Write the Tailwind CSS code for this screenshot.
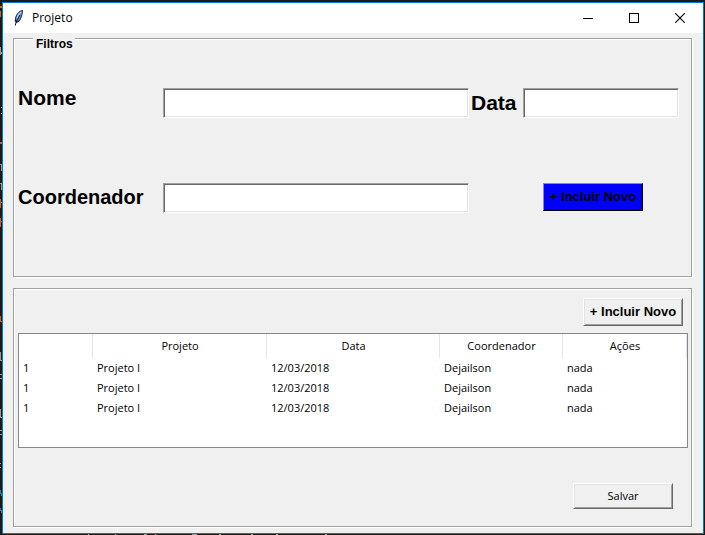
<!DOCTYPE html>
<html lang="pt-BR">
<head>
<meta charset="utf-8">
<meta name="viewport" content="width=device-width, initial-scale=1">
<title>Projeto</title>
<script src="https://cdn.jsdelivr.net/npm/@tailwindcss/browser@4"></script>
</head>
<body class="relative flex min-h-screen flex-col bg-[#1a1a1c] pt-[2px] pr-px pb-px pl-[2px] text-black">
<!-- Fragments of the editor behind the window -->
<div class="absolute inset-0 overflow-hidden" aria-hidden="true">
  <svg class="absolute left-0 top-0" width="2" height="535" shape-rendering="crispEdges">
    <path d="M0 6h2v2h-2zM0 11h1v6h-1z" fill="#b8742c"/>
    <path d="M0 47h1v8h-1zM1 52h1v2h-1zM1 107h1v1h-1zM1 113h1v1h-1zM0 164h2v1h-2zM1 165h1v6h-1zM0 183h2v1h-2zM1 184h1v6h-1zM0 352h1v8h-1zM0 360h2v1h-2zM0 374h2v1h-2zM0 378h2v1h-2zM0 409h1v8h-1zM0 417h2v1h-2zM0 430h2v1h-2zM0 434h2v1h-2zM0 463h1v1h-1zM0 467h1v1h-1z" fill="#9a9a92"/>
    <path d="M0 142h2v2h-2zM0 202h2v1h-2zM0 199h1v9h-1zM0 221h2v1h-2zM0 218h1v9h-1zM0 316h1v6h-1zM1 321h1v1h-1z" fill="#b5633a"/>
    <path d="M0 490h1v4h-1zM1 493h1v3h-1zM0 508h1v3h-1zM1 510h1v3h-1z" fill="#2080a8"/>
  </svg>
  <svg class="absolute bottom-0 left-0" width="360" height="1" shape-rendering="crispEdges">
    <path d="M88 0h1v1h-1zM115 0h1v1h-1zM144 0h3v1h-3zM155 0h1v1h-1zM192 0h5v1h-5zM219 0h2v1h-2zM251 0h2v1h-2zM276 0h2v1h-2zM325 0h2v1h-2z" fill="#8ca0a8"/>
  </svg>
</div>

<div class="relative flex grow flex-col border border-[#0078d7] bg-[#f0f0f0]">
  <header class="flex h-[30px] shrink-0 items-center bg-white pl-[9px]">
    <svg class="shrink-0" width="14" height="18" viewBox="0 0 14 18" aria-hidden="true">
      <path d="M10.500 1C7.500 1.500 4.500 4.500 3.300 8.200L2.600 12l1.700 2 2.800-1.200C9.500 10 10.800 6 11 1.500z" fill="#1b2638"/>
      <path d="M10 1.800C7 3 5 5.600 4.200 8.500l-.4 3 1 .9 2.200-1C9 8.700 10 5.800 10 1.800z" fill="#5a8fd0"/>
      <path d="M9 3C6.700 5 5.500 7 5 9.600" fill="none" stroke="#b9d3ee" stroke-width="1.300"/>
      <path d="M8 6C6.200 9 4.200 12 3.200 16.500" fill="none" stroke="#111" stroke-width="1"/>
    </svg>
    <h1 class="ml-[6px] grow font-['Open_Sans','Noto_Sans',sans-serif] text-[12px] leading-[16px]">Projeto</h1>
    <button type="button" aria-label="Minimizar" class="flex h-[28px] w-[46px] items-center justify-center">
      <svg width="10" height="10" shape-rendering="crispEdges"><path d="M0 5h10v1H0z"/></svg>
    </button>
    <button type="button" aria-label="Maximizar" class="flex h-[28px] w-[46px] items-center justify-center">
      <svg width="10" height="10" shape-rendering="crispEdges"><path d="M.5 .5h9v9h-9z" fill="none" stroke="#000"/></svg>
    </button>
    <button type="button" aria-label="Fechar" class="flex h-[28px] w-[46px] items-center justify-center">
      <svg width="10" height="10"><path d="M.2 .2l9.600 9.600M9.800 .2L.2 9.800" stroke="#000" stroke-width="1.100"/></svg>
    </button>
  </header>

  <main class="flex grow flex-col gap-[11px] px-[10px] pt-[4px] pb-[5px] font-['Liberation_Sans',Arial,sans-serif]">
    <form class="mr-px">
      <fieldset class="h-[240px] min-w-0 border border-[#a0a0a0] px-[4px] shadow-[inset_1px_1px_0_#fff,1px_1px_0_#fff]">
        <legend class="ml-[15px] h-[3px] bg-[#f0f0f0] pr-[2px] pl-[3px] text-[12px] leading-[14px] font-bold">Filtros</legend>
        <div class="grid grid-cols-[145px_minmax(0,306fr)_54px_minmax(0,156fr)] items-center pt-[48px] pr-[8px]">
          <label for="nome" class="mb-[10px] text-[21px] leading-[20px] font-bold">Nome</label>
          <input id="nome" type="text" class="h-[30px] w-full min-w-0 border border-t-[#a0a0a0] border-r-white border-b-white border-l-[#a0a0a0] bg-white px-[4px] text-[14px] shadow-[inset_1px_1px_0_#696969,inset_-1px_-1px_0_#e3e3e3] outline-none">
          <label for="data" class="pl-[2px] text-[21px] leading-[20px] font-bold">Data</label>
          <input id="data" type="text" class="h-[30px] w-full min-w-0 border border-t-[#a0a0a0] border-r-white border-b-white border-l-[#a0a0a0] bg-white px-[4px] text-[14px] shadow-[inset_1px_1px_0_#696969,inset_-1px_-1px_0_#e3e3e3] outline-none">
        </div>
        <div class="grid grid-cols-[145px_minmax(0,306fr)_54px_minmax(0,156fr)] items-center pt-[65px] pr-[8px]">
          <label for="coordenador" class="mb-[2px] text-[20px] leading-[20px] font-bold">Coordenador</label>
          <input id="coordenador" type="text" class="h-[30px] w-full min-w-0 border border-t-[#a0a0a0] border-r-white border-b-white border-l-[#a0a0a0] bg-white px-[4px] text-[14px] shadow-[inset_1px_1px_0_#696969,inset_-1px_-1px_0_#e3e3e3] outline-none">
          <button type="button" class="col-start-4 mb-[2px] ml-[20px] h-[28px] w-[100px] border border-t-[#8080ff] border-r-black border-b-black border-l-[#8080ff] bg-[#0000ff] text-[13px] leading-[16px] font-bold whitespace-nowrap shadow-[inset_-1px_-1px_0_#0000a0]">+ Incluir Novo</button>
        </div>
      </fieldset>
    </form>

    <section class="mr-px mb-px flex grow flex-col border border-[#a0a0a0] pt-[9px] pr-[3px] pb-[17px] pl-[4px] shadow-[inset_1px_1px_0_#fff,1px_1px_0_#fff]">
      <button type="button" class="mr-[5px] h-[28px] w-[100px] self-end border border-t-white border-r-[#696969] border-b-[#696969] border-l-white text-[13px] leading-[16px] font-bold whitespace-nowrap shadow-[inset_1px_1px_0_#e3e3e3,inset_-1px_-1px_0_#a0a0a0]">+ Incluir Novo</button>
      <div class="mt-[7px] min-h-[115px] border border-[#828790] bg-white">
        <table class="w-full table-fixed border-collapse font-['Open_Sans','Noto_Sans',sans-serif] text-[11px] leading-[20px]">
          <colgroup>
            <col class="w-[74px]"><col class="w-[174px]"><col class="w-[173px]"><col class="w-[123px]"><col>
          </colgroup>
          <thead>
            <tr class="h-[24px]">
              <th scope="col" class="p-0 shadow-[inset_-1px_0_0_#e5e5e5]" aria-label="Número"></th>
              <th scope="col" class="p-0 font-normal shadow-[inset_-1px_0_0_#e5e5e5]">Projeto</th>
              <th scope="col" class="p-0 font-normal shadow-[inset_-1px_0_0_#e5e5e5]">Data</th>
              <th scope="col" class="p-0 font-normal shadow-[inset_-1px_0_0_#e5e5e5]">Coordenador</th>
              <th scope="col" class="p-0 font-normal shadow-[inset_-1px_0_0_#e5e5e5]">Ações</th>
            </tr>
          </thead>
          <tbody>
            <tr><td class="px-[4px] py-0">1</td><td class="px-[4px] py-0">Projeto I</td><td class="px-[4px] py-0">12/03/2018</td><td class="px-[4px] py-0">Dejailson</td><td class="px-[4px] py-0">nada</td></tr>
            <tr><td class="px-[4px] py-0">1</td><td class="px-[4px] py-0">Projeto I</td><td class="px-[4px] py-0">12/03/2018</td><td class="px-[4px] py-0">Dejailson</td><td class="px-[4px] py-0">nada</td></tr>
            <tr><td class="px-[4px] py-0">1</td><td class="px-[4px] py-0">Projeto I</td><td class="px-[4px] py-0">12/03/2018</td><td class="px-[4px] py-0">Dejailson</td><td class="px-[4px] py-0">nada</td></tr>
          </tbody>
        </table>
      </div>
      <button type="button" class="mt-auto mr-[15px] h-[26px] w-[100px] self-end border border-t-white border-r-[#696969] border-b-[#696969] border-l-white font-['Open_Sans','Noto_Sans',sans-serif] text-[11px] leading-[16px] shadow-[inset_1px_1px_0_#e3e3e3,inset_-1px_-1px_0_#a0a0a0]">Salvar</button>
    </section>
  </main>
</div>
</body>
</html>
